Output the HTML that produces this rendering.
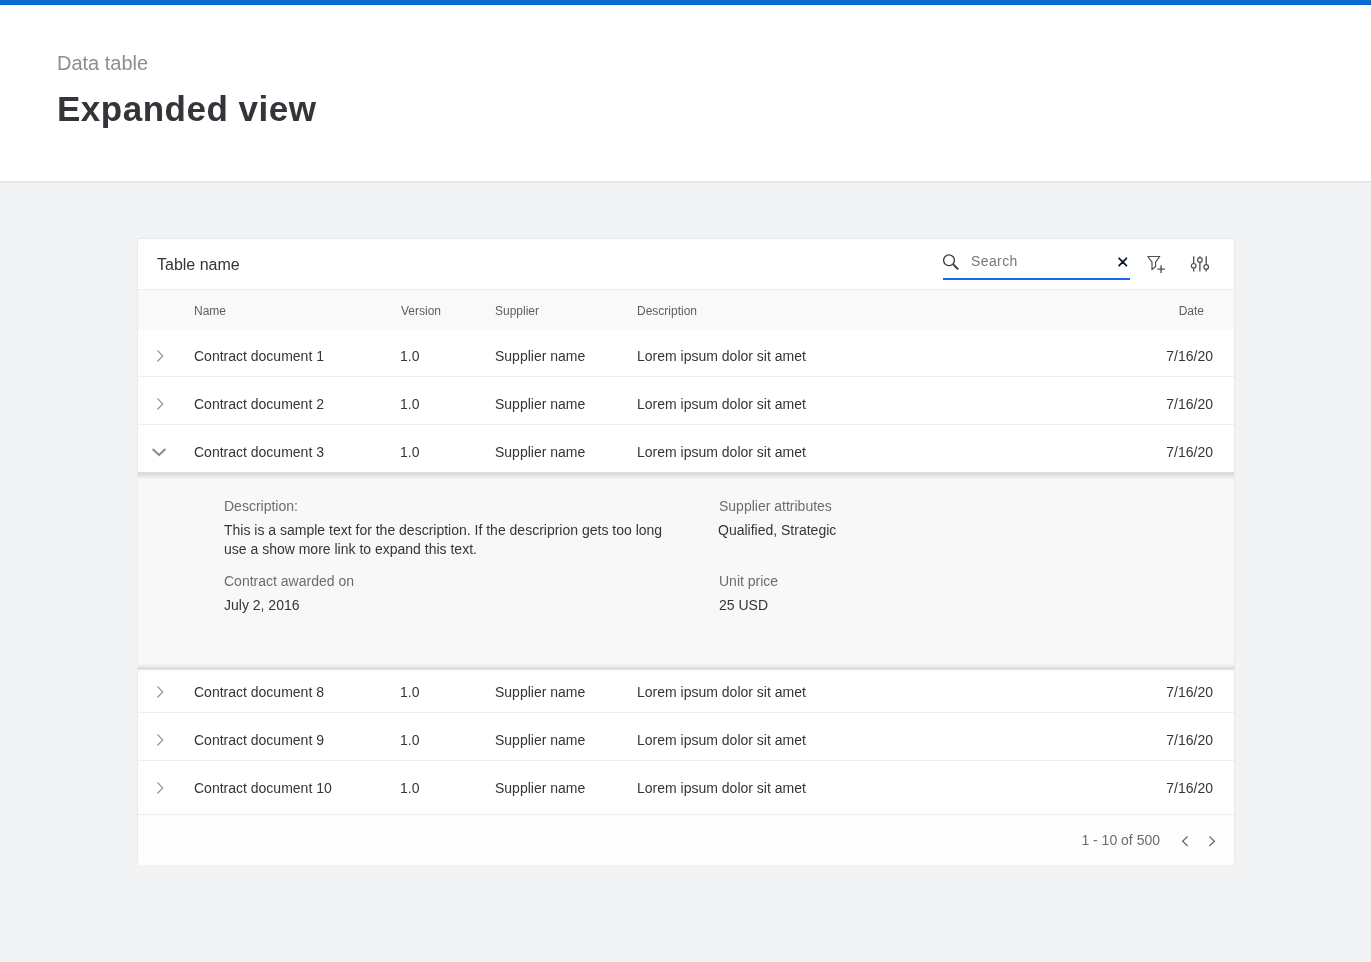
<!DOCTYPE html>
<html>
<head>
<meta charset="utf-8">
<style>
html,body{margin:0;padding:0;}
body{width:1371px;height:962px;position:relative;overflow:hidden;background:#f2f3f4;font-family:"Liberation Sans",sans-serif;color:#32363a;}
.abs{position:absolute;white-space:nowrap;}
#root{position:absolute;left:0;top:0;width:1371px;height:962px;overflow:hidden;will-change:transform;-webkit-font-smoothing:antialiased;}
#topbar{position:absolute;left:0;top:0;width:1371px;height:4px;background:#0a6ed1;border-bottom:1px solid #0062cc;}
#header{position:absolute;left:0;top:5px;width:1371px;height:176px;background:#fff;border-bottom:2px solid #e6e7e7;}
#crumb{left:57px;top:53px;font-size:20px;line-height:20px;color:#8b8e92;}
#title{left:57px;top:91px;font-size:35px;line-height:35px;font-weight:bold;color:#32363a;letter-spacing:0.5px;}
#card{position:absolute;left:137px;top:238px;width:1096px;height:626px;background:#fff;border:1px solid #e8e9ea;border-bottom:none;border-radius:4px;overflow:hidden;}
.t14{font-size:14px;line-height:14px;}
.t12{font-size:12px;line-height:12px;}
.tname{font-size:16px;line-height:16px;}
.lbl{color:#6a6d70;}
.hl{color:#5c5f63;}
.hline{position:absolute;left:0;width:1096px;height:1px;background:#ededed;}
.hdr{position:absolute;left:0;width:1096px;height:40px;background:#f9f9f9;}
.panel{position:absolute;left:0;width:1096px;background:linear-gradient(to bottom,#dddddd 0px,#dddddd 1px,#d9d9d9 1px,#d9d9d9 2px,#dedede 2px,#dedede 3px,#e5e5e5 3px,#e5e5e5 4px,#e8e8e8 4px,#e8e8e8 5px,#ededed 5px,#ededed 6px,#f4f4f4 6px,#f4f4f4 7px,#f8f8f8 7px,#f8f8f8 190px,#f8f8f8 190px,#f8f8f8 191px,#f7f7f7 191px,#f7f7f7 192px,#f3f3f3 192px,#f3f3f3 193px,#f0f0f0 193px,#f0f0f0 194px,#e9e9e9 194px,#e9e9e9 195px,#e2e2e2 195px,#e2e2e2 196px,#d9d9d9 196px,#d9d9d9 197px,#e4e4e4 197px,#e4e4e4 198px);}
.pshadow{position:absolute;left:0;width:1096px;height:3px;background:linear-gradient(to bottom,#fafafa 0,#fafafa 1px,#fcfcfc 1px,#fcfcfc 2px,#fefefe 2px,#fefefe 3px);}
.footer{position:absolute;left:0;width:1096px;background:#fdfdfd;}
.ic{position:absolute;overflow:visible;}
</style>
</head>
<body>
<div id="root">
<div id="topbar"></div>
<div id="header"></div>
<div class="abs" id="crumb">Data table</div>
<div class="abs" id="title">Expanded view</div>
<div id="card">
<div class="abs tname" style="left:19px;top:18px;">Table name</div>
<div class="hline" style="top:50px"></div>
<div class="hdr" style="top:51px"></div>
<div class="hline" style="top:137px"></div>
<div class="hline" style="top:185px"></div>
<div class="hline" style="top:473px"></div>
<div class="hline" style="top:521px"></div>
<div class="hline" style="top:575px"></div>
<div class="abs t12 hl" style="left:56px;top:66px;">Name</div>
<div class="abs t12 hl" style="left:263px;top:66px;">Version</div>
<div class="abs t12 hl" style="left:357px;top:66px;">Supplier</div>
<div class="abs t12 hl" style="left:499px;top:66px;">Description</div>
<div class="abs t12 hl" style="right:30px;top:66px;">Date</div>
<div class="panel" style="top:233px;height:198px"></div>
<div class="pshadow" style="top:431px"></div>
<div class="abs t14" style="left:56px;top:110px;">Contract document 1</div>
<div class="abs t14" style="left:262px;top:110px;">1.0</div>
<div class="abs t14" style="left:357px;top:110px;">Supplier name</div>
<div class="abs t14" style="left:499px;top:110px;">Lorem ipsum dolor sit amet</div>
<div class="abs t14" style="right:21px;top:110px;">7/16/20</div>
<svg class="ic" style="left:8px;top:105px" width="24" height="24" viewBox="0 0 24 24"><path d="M11.4 6.4 L16.75 12 L11.4 17.5" fill="none" stroke="#8f9197" stroke-width="1.1"/></svg>
<div class="abs t14" style="left:56px;top:158px;">Contract document 2</div>
<div class="abs t14" style="left:262px;top:158px;">1.0</div>
<div class="abs t14" style="left:357px;top:158px;">Supplier name</div>
<div class="abs t14" style="left:499px;top:158px;">Lorem ipsum dolor sit amet</div>
<div class="abs t14" style="right:21px;top:158px;">7/16/20</div>
<svg class="ic" style="left:8px;top:153px" width="24" height="24" viewBox="0 0 24 24"><path d="M11.4 6.4 L16.75 12 L11.4 17.5" fill="none" stroke="#8f9197" stroke-width="1.1"/></svg>
<div class="abs t14" style="left:56px;top:206px;">Contract document 3</div>
<div class="abs t14" style="left:262px;top:206px;">1.0</div>
<div class="abs t14" style="left:357px;top:206px;">Supplier name</div>
<div class="abs t14" style="left:499px;top:206px;">Lorem ipsum dolor sit amet</div>
<div class="abs t14" style="right:21px;top:206px;">7/16/20</div>
<svg class="ic" style="left:8px;top:201px" width="24" height="24" viewBox="0 0 24 24"><path d="M6.6 8.9 L13 15.1 L19.4 8.9" fill="none" stroke="#8d8e95" stroke-width="2.1"/></svg>
<div class="abs t14" style="left:56px;top:446px;">Contract document 8</div>
<div class="abs t14" style="left:262px;top:446px;">1.0</div>
<div class="abs t14" style="left:357px;top:446px;">Supplier name</div>
<div class="abs t14" style="left:499px;top:446px;">Lorem ipsum dolor sit amet</div>
<div class="abs t14" style="right:21px;top:446px;">7/16/20</div>
<svg class="ic" style="left:8px;top:441px" width="24" height="24" viewBox="0 0 24 24"><path d="M11.4 6.4 L16.75 12 L11.4 17.5" fill="none" stroke="#8f9197" stroke-width="1.1"/></svg>
<div class="abs t14" style="left:56px;top:494px;">Contract document 9</div>
<div class="abs t14" style="left:262px;top:494px;">1.0</div>
<div class="abs t14" style="left:357px;top:494px;">Supplier name</div>
<div class="abs t14" style="left:499px;top:494px;">Lorem ipsum dolor sit amet</div>
<div class="abs t14" style="right:21px;top:494px;">7/16/20</div>
<svg class="ic" style="left:8px;top:489px" width="24" height="24" viewBox="0 0 24 24"><path d="M11.4 6.4 L16.75 12 L11.4 17.5" fill="none" stroke="#8f9197" stroke-width="1.1"/></svg>
<div class="abs t14" style="left:56px;top:542px;">Contract document 10</div>
<div class="abs t14" style="left:262px;top:542px;">1.0</div>
<div class="abs t14" style="left:357px;top:542px;">Supplier name</div>
<div class="abs t14" style="left:499px;top:542px;">Lorem ipsum dolor sit amet</div>
<div class="abs t14" style="right:21px;top:542px;">7/16/20</div>
<svg class="ic" style="left:8px;top:537px" width="24" height="24" viewBox="0 0 24 24"><path d="M11.4 6.4 L16.75 12 L11.4 17.5" fill="none" stroke="#8f9197" stroke-width="1.1"/></svg>
<div class="abs t14 lbl" style="left:86px;top:260px;">Description:</div>
<div class="abs" style="left:86px;top:282px;font-size:14px;line-height:19px;">This is a sample text for the description. If the descriprion gets too long<br>use a show more link to expand this text.</div>
<div class="abs t14 lbl" style="left:86px;top:335px;">Contract awarded on</div>
<div class="abs t14" style="left:86px;top:359px;">July 2, 2016</div>
<div class="abs t14 lbl" style="left:581px;top:260px;">Supplier attributes</div>
<div class="abs t14" style="left:580px;top:284px;">Qualified, Strategic</div>
<div class="abs t14 lbl" style="left:581px;top:335px;">Unit price</div>
<div class="abs t14" style="left:581px;top:359px;">25 USD</div>
<div class="footer" style="top:576px;height:50px"></div>
<div class="abs t14 lbl" style="right:74px;top:594px;">1 - 10 of 500</div>
<svg class="ic" style="left:1035px;top:590px" width="24" height="24" viewBox="0 0 24 24"><path d="M14.6 7.5 L9.6 12.25 L14.6 17" fill="none" stroke="#6a6d70" stroke-width="1.3"/></svg>
<svg class="ic" style="left:1062px;top:590px" width="24" height="24" viewBox="0 0 24 24"><path d="M9.4 7.5 L14.4 12.25 L9.4 17" fill="none" stroke="#6a6d70" stroke-width="1.3"/></svg>
<svg class="ic" style="left:798px;top:9px" width="28" height="28" viewBox="936 248 28 28"><circle cx="949" cy="260.3" r="5.4" fill="none" stroke="#32363a" stroke-width="1.3"/><path d="M953.2 264.4 L958.2 269.4" stroke="#32363a" stroke-width="2" stroke-linecap="butt"/></svg>
<div class="abs t14" style="left:833px;top:15px;color:#74777a;letter-spacing:0.4px;">Search</div>
<svg class="ic" style="left:972px;top:11px" width="24" height="24" viewBox="1110 250 24 24"><path d="M1119.1 258.3 L1126.4 265.7 M1126.4 258.3 L1119.1 265.7" stroke="#0d1a30" stroke-width="1.8" stroke-linecap="round"/></svg>
<div class="abs" style="left:805px;top:39px;width:187px;height:2px;background:#1766f0;"></div>
<svg class="ic" style="left:1002px;top:11px" width="30" height="28" viewBox="1140 250 30 28"><path d="M1147.8 256.5 L1159.8 256.5 L1155.6 262.2 L1155.6 266.5 L1152 269.6 L1152 262.2 Z" fill="none" stroke="#4b4e52" stroke-width="1.2" stroke-linejoin="round"/><path d="M1157.3 269.1 L1164.8 269.1 M1161.05 265.2 L1161.05 272.9" stroke="#4b4e52" stroke-width="1.3"/></svg>
<svg class="ic" style="left:1047px;top:11px" width="30" height="28" viewBox="1185 250 30 28"><path d="M1193.7 256.3 L1193.7 263.2 M1193.7 268.4 L1193.7 271.6 M1199.9 256.3 L1199.9 257.4 M1199.9 262.6 L1199.9 271.6 M1206.2 256.3 L1206.2 264.3 M1206.2 269.5 L1206.2 271.6" stroke="#4b4e52" stroke-width="1.3"/><circle cx="1193.7" cy="265.8" r="2.3" fill="none" stroke="#4b4e52" stroke-width="1.2"/><circle cx="1199.9" cy="260" r="2.3" fill="none" stroke="#4b4e52" stroke-width="1.2"/><circle cx="1206.2" cy="266.9" r="2.3" fill="none" stroke="#4b4e52" stroke-width="1.2"/></svg>
</div>
</div>
</body>
</html>
